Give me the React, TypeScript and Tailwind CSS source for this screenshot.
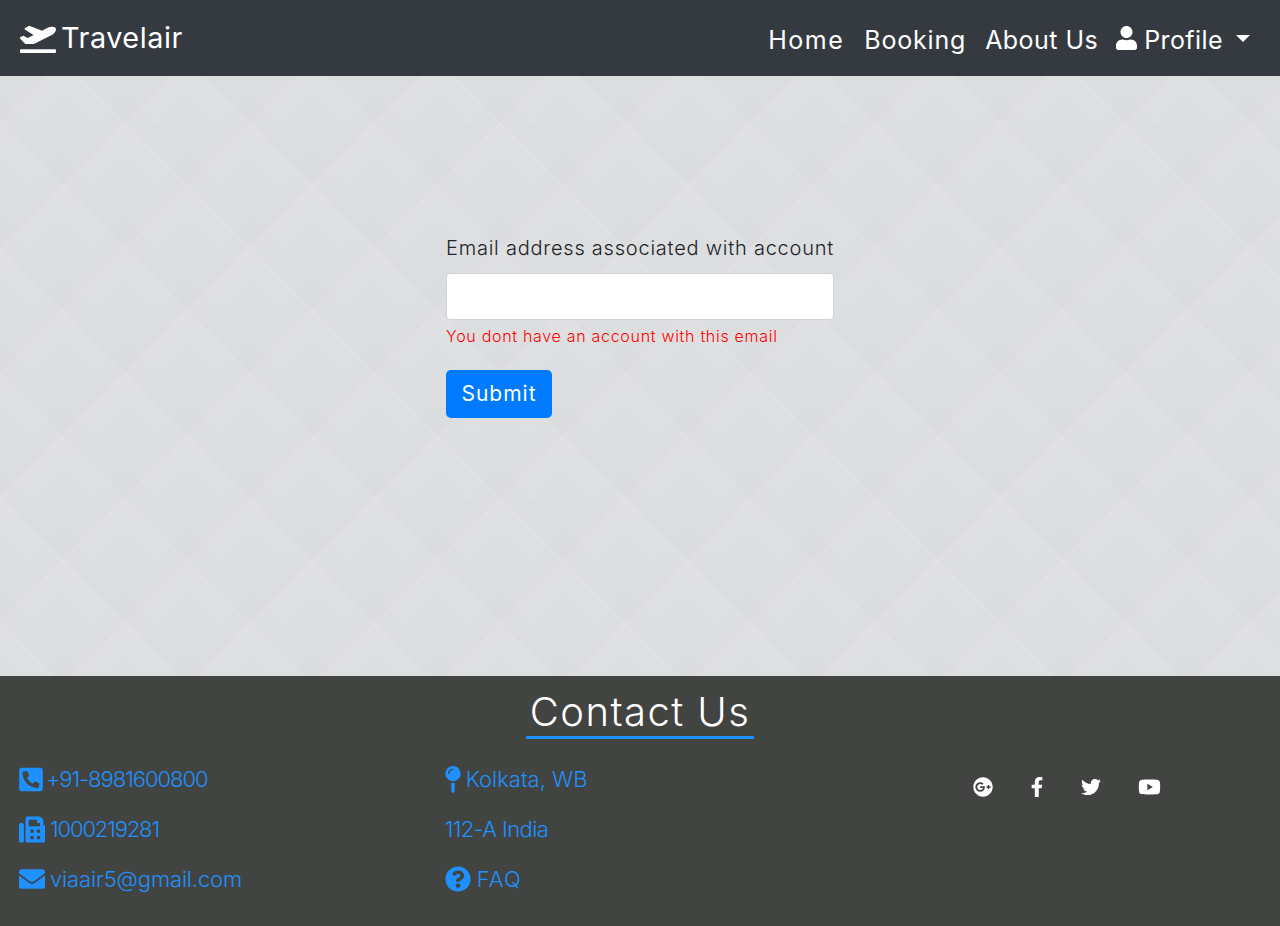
import {
  FaPlaneDeparture,
  FaUser,
  FaPhoneSquareAlt,
  FaFax,
  FaEnvelope,
  FaMapPin,
  FaQuestionCircle,
  FaGooglePlus,
  FaFacebookF,
  FaTwitter,
  FaYoutube,
} from "react-icons/fa";

function NavBar() {
  return (
    <nav className="h-[76px] bg-[#343a40] flex items-center justify-between pl-5 pr-[30px] text-white">
      <a className="flex items-center gap-[5px]">
        <FaPlaneDeparture className="w-9 h-[29px]" />
        <span className="text-[28.8px] tracking-[0.55px] leading-none">Travelair</span>
      </a>
      <div className="flex items-center text-[25px] leading-none pt-1">
        <a className="tracking-[1.5px] mr-[20px]">Home</a>
        <a className="tracking-[0.8px] mr-[19px]">Booking</a>
        <a className="tracking-[0.46px] mr-[18px]">About Us</a>
        <a className="flex items-center tracking-[0.42px]">
          <FaUser className="w-[21px] h-6 mr-[7px] -mt-1" />
          Profile
          <span className="ml-[13px] -mt-1 w-0 h-0 border-x-[7px] border-x-transparent border-t-[7px] border-t-white" />
        </a>
      </div>
    </nav>
  );
}

function ForgotForm() {
  return (
    <main className="h-[600px] pt-[159px] bg-[#dfe0e2] bg-[linear-gradient(45deg,rgba(0,0,0,0.009)_0,rgba(0,0,0,0)_49.4%,rgba(255,255,255,0.08)_50%,rgba(0,0,0,0.009)_50.6%,rgba(0,0,0,0)_99.4%,rgba(255,255,255,0.08)_100%),linear-gradient(315deg,rgba(0,0,0,0.009)_0,rgba(0,0,0,0)_49.4%,rgba(255,255,255,0.08)_50%,rgba(0,0,0,0.009)_50.6%,rgba(0,0,0,0)_99.4%,rgba(255,255,255,0.08)_100%)] bg-[length:125px_125px] bg-[position:0_48px]">
      <form className="w-[388px] mx-auto font-light">
        <label className="block text-[20px] leading-[26px] text-[#212529] tracking-[0.77px] whitespace-nowrap">
          Email address associated with account
        </label>
        <input className="block w-full h-[47px] mt-[12px] bg-white border border-[#ced4da] rounded" type="email" />
        <p className="text-[16px] leading-6 mt-1 text-[#ff0000] tracking-[0.7px] whitespace-nowrap">You dont have an account with this email</p>
        <button type="button" className="block mt-[22px] w-[106px] h-12 bg-[#007bff] text-white text-[21px] font-normal tracking-[1px] rounded-[5px]">
          Submit
        </button>
      </form>
    </main>
  );
}

function Footer() {
  return (
    <footer className="h-[250px] bg-[#424441] text-[#1e90ff] text-[22px] font-light">
      <div className="flex justify-center pt-[9px]">
        <h2 className="w-[228px] h-[54px] text-center text-white text-[40px] leading-[54px] tracking-[1.45px] border-b-[3px] border-[#1e90ff]">
          Contact Us
        </h2>
      </div>
      <div className="grid grid-cols-3 mt-[25px]">
        <ul className="pl-[19px] flex flex-col gap-5 leading-[30px]">
          <li className="flex items-center gap-[3px]">
            <FaPhoneSquareAlt className="w-6 h-[27px]" />
            <span className="tracking-[-1.03px]">+91-8981600800</span>
          </li>
          <li className="flex items-center gap-[5px]">
            <FaFax className="w-[26px] h-[27px]" />
            <span className="tracking-[-1.15px]">1000219281</span>
          </li>
          <li className="flex items-center gap-[5px]">
            <FaEnvelope className="w-[26px] h-[26px]" />
            <span className="tracking-[-0.15px]">viaair5@gmail.com</span>
          </li>
        </ul>
        <ul className="pl-[18px] flex flex-col gap-5 leading-[30px]">
          <li className="flex items-center gap-[5px]">
            <FaMapPin className="w-[16px] h-[27px]" />
            <span>Kolkata, WB</span>
          </li>
          <li className="tracking-[-0.6px]">112-A India</li>
          <li className="flex items-center gap-[6px]">
            <FaQuestionCircle className="w-[26px] h-[26px]" />
            <span className="tracking-[1.1px]">FAQ</span>
          </li>
        </ul>
        <div className="flex items-center h-[20px] mt-[13px] pl-[120px] text-white">
          <FaGooglePlus className="w-5 h-5" />
          <FaFacebookF className="w-[14px] h-5 ml-[37px]" />
          <FaTwitter className="w-5 h-5 ml-[37px]" />
          <FaYoutube className="w-[23px] h-5 ml-[37px]" />
        </div>
      </div>
    </footer>
  );
}

export default function App() {
  return (
    <div className="w-[1280px] h-[926px] overflow-hidden font-['Inter',sans-serif]">
      <NavBar />
      <ForgotForm />
      <Footer />
    </div>
  );
}
